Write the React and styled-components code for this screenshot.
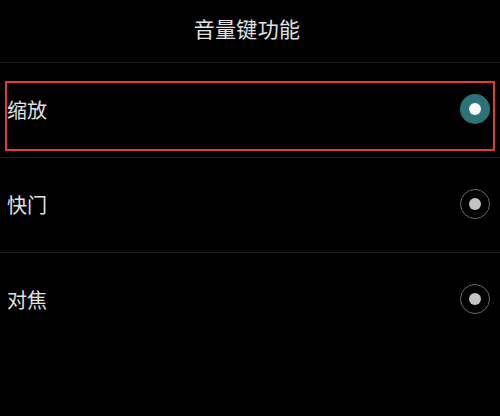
import React, { useState } from 'react';
import styled, { createGlobalStyle } from 'styled-components';

const GlobalStyle = createGlobalStyle`
  html, body {
    margin: 0;
    padding: 0;
    background: #000;
  }
  body {
    font-family: "Noto Sans CJK SC", "Noto Sans", sans-serif;
  }
`;

const Screen = styled.div`
  width: 500px;
  height: 416px;
  background: #000;
  color: #e2e2e2;
  overflow: hidden;
`;

const Header = styled.div`
  height: 56px;
  display: flex;
  align-items: center;
  justify-content: center;
  border-bottom: 1px solid #1b1b1b;
  font-size: 21px;
  padding-bottom: 6px;
  padding-right: 6px;
  letter-spacing: 0.3px;
`;

const Row = styled.div`
  position: relative;
  height: 94px;
  display: flex;
  align-items: center;
  justify-content: space-between;
  padding: 0 10px 0 7px;
  border-bottom: 1px solid ${p => (p.last ? 'transparent' : '#1b1b1b')};
  font-size: 20px;
  cursor: pointer;
`;

const Label = styled.span`
  line-height: 1;
`;

const Highlight = styled.div`
  position: absolute;
  left: 5px;
  top: 18px;
  width: 490px;
  height: 70px;
  box-sizing: border-box;
  border: 2px solid #e53935;
  pointer-events: none;
`;

const Radio = styled.span`
  width: 30px;
  height: 30px;
  box-sizing: border-box;
  border-radius: 50%;
  display: flex;
  align-items: center;
  justify-content: center;
  margin-top: -2px;
  background: ${p => (p.checked ? '#2b7377' : 'transparent')};
  border: ${p => (p.checked ? 'none' : '1.5px solid #686868')};

  &::after {
    content: '';
    width: 12px;
    height: 12px;
    border-radius: 50%;
    background: ${p => (p.checked ? '#fafafa' : '#c4c4c4')};
  }
`;

const options = ['缩放', '快门', '对焦'];

export default function App() {
  const [selected, setSelected] = useState('缩放');

  return (
    <Screen>
      <GlobalStyle />
      <Header>音量键功能</Header>
      {options.map((opt, i) => (
        <Row key={opt} last={i === options.length - 1} onClick={() => setSelected(opt)}>
          <Label>{opt}</Label>
          <Radio checked={selected === opt} />
          {i === 0 && <Highlight />}
        </Row>
      ))}
    </Screen>
  );
}
